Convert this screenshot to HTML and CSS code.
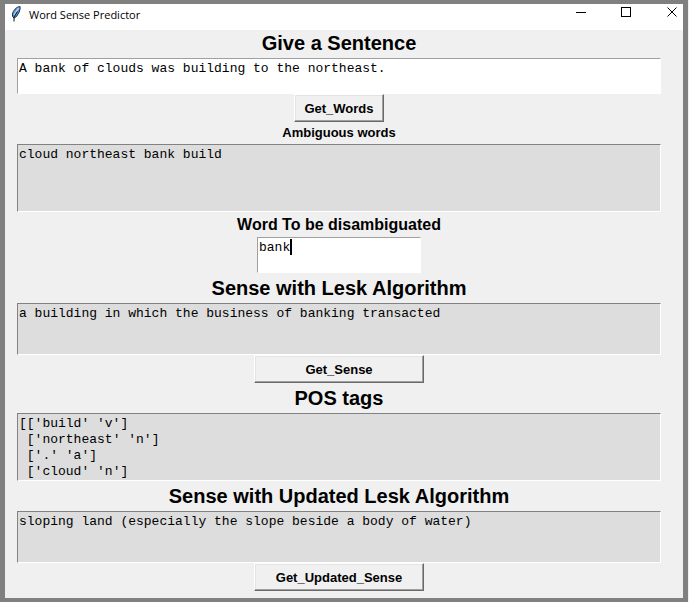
FILE: index.html
```html
<!DOCTYPE html>
<html lang="en">
<head>
<meta charset="utf-8">
<title>Word Sense Predictor</title>
<link rel="stylesheet" href="styles.css">
</head>
<body>
<div class="window">
  <header class="titlebar">
    <svg class="feather" width="10" height="16" viewBox="0 0 10 16" aria-hidden="true">
      <path d="M8.5 0.5C5.5 1 2 4.5 1.5 8L1.5 10.5L3 12L5.5 10.5L7 8L8.2 6L9.2 2.5L9 0.5Z" fill="#5b95d6" stroke="#1d2c45" stroke-width="1"/>
      <path d="M7.5 2L3 9" stroke="#a9cdf2" stroke-width="1.4" fill="none"/>
      <path d="M6.5 5.5L3 11V15.5" stroke="#111" stroke-width="1" fill="none"/>
    </svg>
    <h1 class="title">Word Sense Predictor</h1>
    <div class="controls">
      <button class="control" type="button" aria-label="Minimize">
        <svg width="11" height="11" viewBox="0 0 11 11" shape-rendering="crispEdges"><path d="M1 5.5H11" stroke="#000"/></svg>
      </button>
      <button class="control" type="button" aria-label="Maximize">
        <svg width="11" height="11" viewBox="0 0 11 11" shape-rendering="crispEdges"><path d="M0.5 0.5H9.5V9.5H0.5Z" fill="none" stroke="#000"/></svg>
      </button>
      <button class="control" type="button" aria-label="Close">
        <svg width="11" height="11" viewBox="0 0 11 11"><path d="M0.5 0.5L9.5 9.5M9.5 0.5L0.5 9.5" stroke="#000" stroke-width="1"/></svg>
      </button>
    </div>
  </header>
  <main class="form">
    <label class="heading first" for="sentence">Give a Sentence</label>
    <textarea class="field" id="sentence" rows="2" spellcheck="false">A bank of clouds was building to the northeast.</textarea>
    <button class="action compact" type="button">Get_Words</button>
    <label class="heading small" for="ambiguous">Ambiguous words</label>
    <textarea class="field output" id="ambiguous" rows="4" readonly>cloud northeast bank build</textarea>
    <label class="heading medium" for="word">Word To be disambiguated</label>
    <div class="entry">
      <textarea class="field" id="word" rows="2" spellcheck="false">bank</textarea>
      <span class="caret"></span>
    </div>
    <label class="heading" for="lesk">Sense with Lesk Algorithm</label>
    <textarea class="field output" id="lesk" rows="3" readonly>a building in which the business of banking transacted</textarea>
    <button class="action" type="button">Get_Sense</button>
    <label class="heading" for="tags">POS tags</label>
    <textarea class="field output" id="tags" rows="4" readonly>[['build' 'v']
 ['northeast' 'n']
 ['.' 'a']
 ['cloud' 'n']</textarea>
    <label class="heading" for="updated">Sense with Updated Lesk Algorithm</label>
    <textarea class="field output" id="updated" rows="3" readonly>sloping land (especially the slope beside a body of water)</textarea>
    <button class="action" type="button">Get_Updated_Sense</button>
  </main>
</div>
</body>
</html>
```
FILE: styles.css
```css
* {
  box-sizing: border-box;
}

body {
  margin: 0 1px 0 0;
  background: #f0f0f0;
  color: #000;
  font-family: "Liberation Sans", Arial, sans-serif;
}

.window {
  border: 5px solid #808080;
  border-width: 4px 5px;
  background: #f0f0f0;
}

.titlebar {
  display: flex;
  align-items: flex-start;
  height: 26px;
  padding-left: 6px;
  background: #fff;
}

.feather {
  margin-top: 2px;
}

.title {
  margin: 0 0 0 8px;
  font: 11px/22px "Open Sans", "Segoe UI", sans-serif;
}

.controls {
  display: flex;
  margin-left: auto;
}

.control {
  display: flex;
  justify-content: flex-end;
  width: 46px;
  height: 20px;
  padding: 3px 5px 0 0;
  border: 0;
  background: none;
}

.form {
  display: flex;
  flex-direction: column;
  align-items: center;
  padding: 0 22px 7px 12px;
}

.heading {
  font-size: 20px;
  font-weight: bold;
  line-height: 30px;
}

.first {
  height: 28px;
  line-height: 26px;
}

.medium {
  font-size: 16px;
  line-height: 25px;
}

.small {
  font-size: 13px;
  line-height: 22px;
}

.field {
  display: block;
  width: 100%;
  margin: 0;
  padding: 2px 1px 0;
  border: 1px solid #fff;
  border-top-color: #a0a0a0;
  border-left-color: #a0a0a0;
  border-radius: 0;
  outline: 0;
  background: #fff;
  color: #000;
  font: 13px/16px "Liberation Mono", "Courier New", monospace;
  resize: none;
  overflow: hidden;
}

.output {
  border-top-color: #828282;
  border-left-color: #828282;
  background: #ddd;
}

.entry {
  position: relative;
  width: 164px;
}

.caret {
  position: absolute;
  top: 2px;
  left: 33px;
  width: 2px;
  height: 16px;
  background: #000;
}

.action {
  width: 170px;
  height: 28px;
  padding: 1px 0 0;
  border: 1px solid #696969;
  border-top-color: #fff;
  border-left-color: #fff;
  background: #f0f0f0;
  box-shadow: inset -1px -1px #a0a0a0, inset 1px 1px #e3e3e3;
  color: #000;
  font: bold 13px/16px "Liberation Sans", Arial, sans-serif;
}

.compact {
  width: 90px;
}
```
